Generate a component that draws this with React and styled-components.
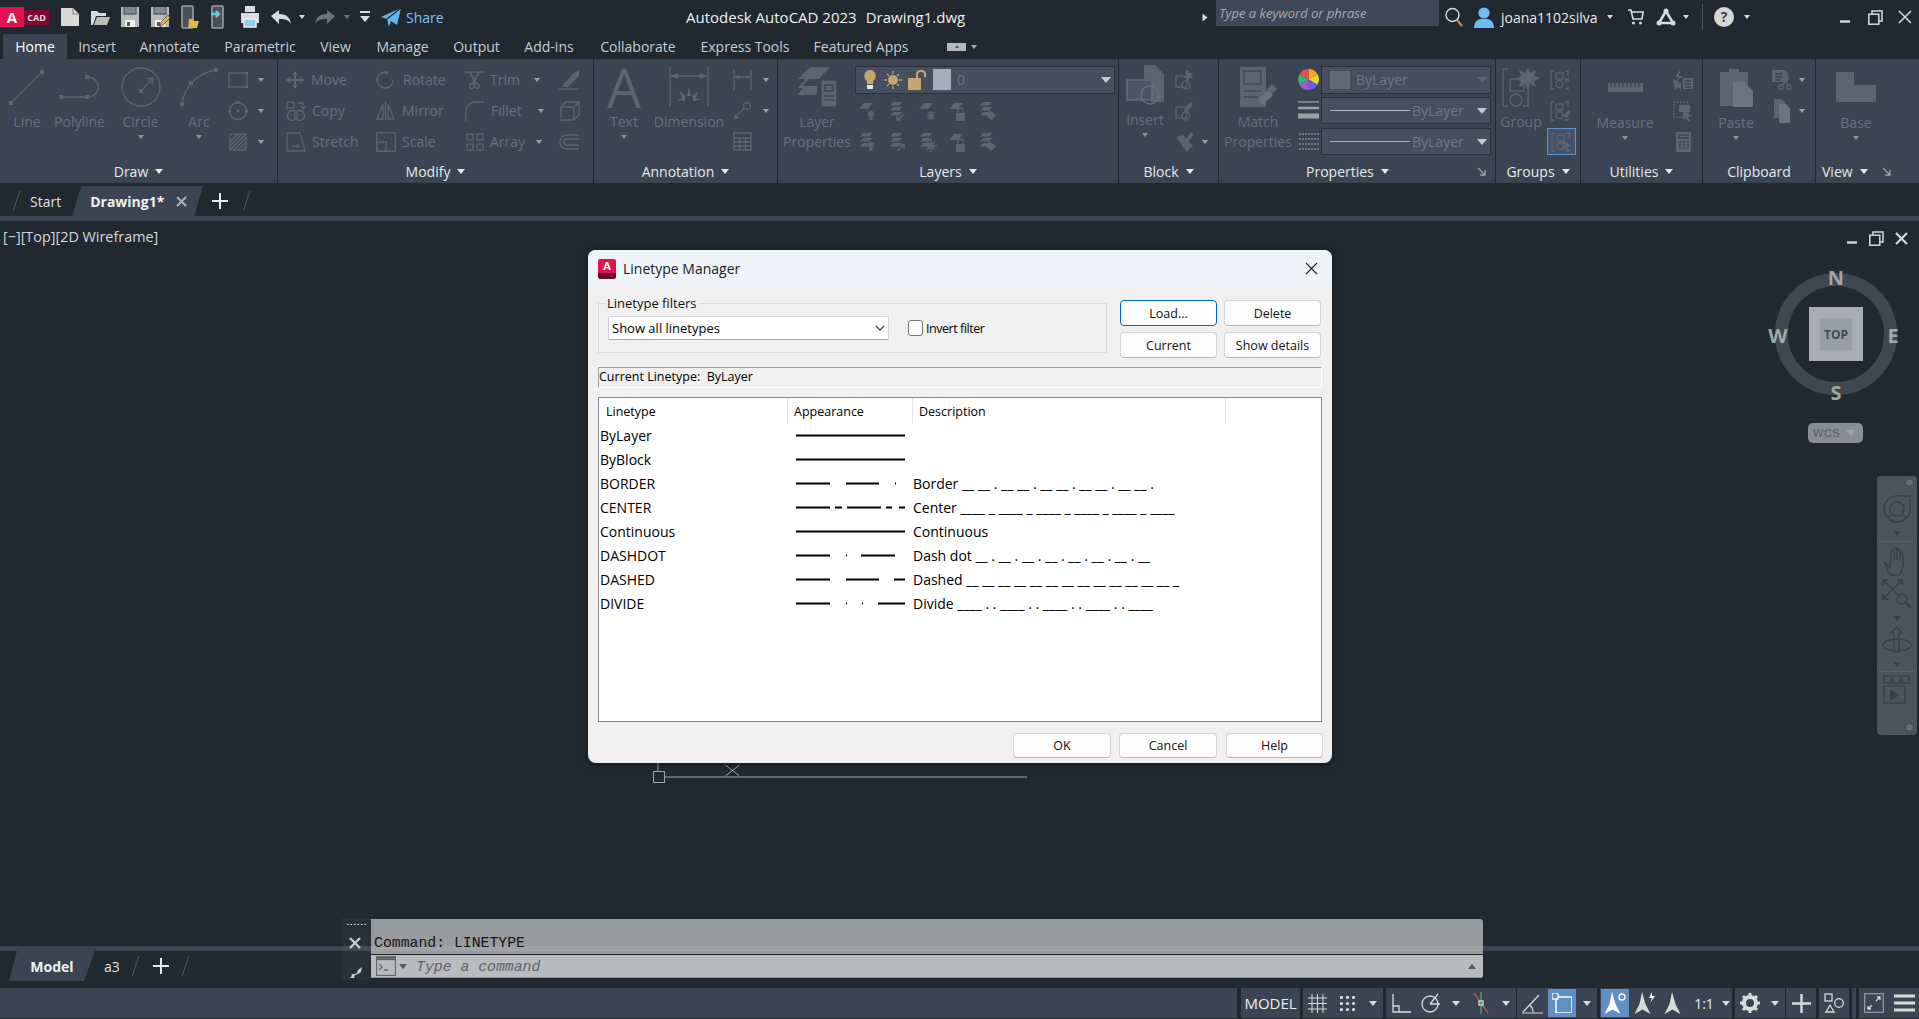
import React from 'react';
import styled, { createGlobalStyle } from 'styled-components';

const Global = createGlobalStyle`
  html, body { margin: 0; padding: 0; background: #212830; }
  * { box-sizing: border-box; }
  body { font-family: "Open Sans", "Liberation Sans", sans-serif; overflow: hidden; }
`;

const Page = styled.div`
  position: relative; width: 1919px; height: 1019px; overflow: hidden;
  background: #212830; display: flex; flex-direction: column; color: #e6e8eb;
`;
const Svg = styled.svg.attrs({ fill: 'none', stroke: 'currentColor', strokeWidth: 1.3 })`
  display: block; flex: none;
`;
const G = ({ s = 20, h, children, ...p }) => (
  <Svg width={s} height={h || s} viewBox={`0 0 ${s} ${h || s}`} {...p}>{children}</Svg>
);
const F = styled.path.attrs({ fill: 'currentColor', stroke: 'none' })``;
const Sq = ({ x, y, r = 2 }) => <rect x={x - r} y={y - r} width={r * 2} height={r * 2} fill="currentColor" stroke="none" />;

const Caret = styled.div`
  width: 0; height: 0; flex: none;
  border-left: ${p => p.$s || 4}px solid transparent;
  border-right: ${p => p.$s || 4}px solid transparent;
  border-top: ${p => (p.$s || 4) + 1}px solid ${p => p.$c || 'currentColor'};
  ${p => p.$up && `border-top: 0; border-bottom: ${(p.$s || 4) + 1}px solid ${p.$c || 'currentColor'};`}
  ${p => p.$right && 'transform: rotate(-90deg);'}
  ${p => p.$ml && `margin-left: ${p.$ml}px;`}
`;
const Slot = styled.div`
  width: ${p => p.$w}px; margin-left: ${p => p.$ml || 0}px; flex: none; height: 100%;
  display: flex; align-items: center; justify-content: center;
  ${p => p.$dim && 'color: #6d7480;'}
`;

/* ---------- title bar ---------- */
const TitleBar = styled.header`
  height: 34px; flex: none; display: flex; align-items: center; color: #d8dbde;
`;
const LeftQuick = styled.div`display: flex; align-items: center; width: 686px; height: 100%; flex: none;`;
const Logo = styled.div`display: flex; align-items: center; width: 55px; flex: none;`;
const LogoA = styled.div`
  width: 24px; height: 20px; background: #e0134f; color: #fff; font: 700 15px "Open Sans", sans-serif;
  display: flex; align-items: center; justify-content: center;
`;
const LogoCad = styled.div`
  width: 25px; height: 15px; background: #7c0b31; color: #e8d3da; font: 700 9px "Open Sans", sans-serif;
  display: flex; align-items: center; justify-content: center;
`;
const ShareText = styled.span`font-size: 14px; color: #79c3f2; margin-left: 2px;`;
const AppTitle = styled.div`font-size: 15px; color: #eef0f2; white-space: nowrap; width: 513px; flex: none; display: flex; gap: 9px;`;
const SearchBox = styled.div`
  width: 223px; height: 26px; align-self: flex-start; margin-left: 5px; flex: none; background: #3f4858;
  color: #a5abb5; font-size: 13px; font-style: italic; padding: 4px 0 0 3px; white-space: nowrap;
`;
const UserName = styled.span`font-size: 14px; color: #e6e8eb; width: 102px; flex: none; padding-left: 1px;`;
const VDivider = styled.div`width: 1px; height: 26px; background: #4a5362; margin-left: 10px; flex: none;`;

/* ---------- ribbon tabs ---------- */
const TabRow = styled.nav`height: 25px; flex: none; display: flex; padding-left: 3px;`;
const RTab = styled.div`
  width: ${p => p.$w}px; flex: none; font-size: 14px; display: flex; align-items: center; justify-content: center;
  background: ${p => (p.$on ? '#3b4453' : 'transparent')}; color: ${p => (p.$on ? '#fff' : '#c6ccd4')};
`;
const PanelToggle = styled.div`
  margin-left: 26px; display: flex; align-items: center; gap: 5px; color: #a9aeb6;
`;
const ToggleBtn = styled.div`width: 19px; height: 8px; background: #b5b8bc; display: flex; align-items: center; justify-content: center;`;

/* ---------- ribbon ---------- */
const Ribbon = styled.section`
  height: 124px; flex: none; display: flex; background: #3b4453; color: #5c646f;
`;
const Panel = styled.div`
  width: ${p => p.$w}px; flex: none; display: flex; flex-direction: column; border-right: 1px solid #222932;
  ${p => p.$last && 'border-right: 0;'}
`;
const PanelBody = styled.div`height: 100px; flex: none; display: flex; padding-top: 5px;`;
const PanelTitle = styled.div`
  height: 24px; flex: none; display: flex; align-items: center; gap: 7px; color: #e6e8eb; font-size: 14px;
  justify-content: ${p => (p.$pl !== undefined ? 'flex-start' : 'center')};
  padding-left: ${p => p.$pl || 0}px;
`;
const Launcher = styled.div`margin-left: ${p => p.$ml}px; color: #9ba2ab; display: flex;`;
const Large = styled.div`
  width: ${p => p.$w}px; margin-left: ${p => p.$ml || 0}px; flex: none; display: flex; flex-direction: column;
  align-items: center; padding-top: ${p => p.$pt ?? 3}px;
`;
const LIcon = styled.div`height: 40px; display: flex; align-items: center; justify-content: center; flex: none;`;
const Label = styled.div`
  font-size: 14px; line-height: 20px; color: #667080; text-align: center; white-space: nowrap;
  margin-top: ${p => p.$mt ?? 5}px;
`;
const LCaret = styled.div`margin-top: 3px; color: #8b929c;`;
const BigA = styled.span`font: 400 54px/40px "Open Sans", sans-serif; color: #5c646f;`;
const Col = styled.div`width: ${p => p.$w}px; flex: none;`;
const Row = styled.div`
  height: 31px; display: flex; align-items: center; padding-left: ${p => p.$pl || 0}px;
`;
const IconBox = styled.div`width: ${p => p.$w}px; flex: none; display: flex; justify-content: center; align-items: center;`;
const RowText = styled.span`
  font-size: 14px; color: #667080; margin-left: ${p => p.$ml || 0}px; width: ${p => p.$w}px; flex: none; white-space: nowrap;
`;
const CaretSlot = styled.div`width: ${p => p.$w}px; flex: none; display: flex; justify-content: center; color: #9aa0a8;`;
const LayerStack = styled.div`width: 260px; flex: none;`;
const Combo = styled.div`
  width: ${p => p.$w}px; height: ${p => p.$h}px; flex: none; display: flex; align-items: center; background: #454f60;
  border: 1px solid #2a313c; color: #6f7786; font-size: 14px; padding-left: ${p => p.$pl || 8}px; white-space: nowrap;
  margin-left: 2px;
`;
const ComboCaret = styled.div`margin-left: auto; padding-right: 3px; color: #c5c9ce;`;
const ComboSwatch = styled.div`width: 20px; height: 18px; background: #636a76; margin-right: 6px; flex: none;`;
const LayerSwatch = styled(ComboSwatch)`width: 18px; height: 21px; background: #a7adba;`;
const ComboLine = styled.div`width: 80px; height: 1px; background: #aab0b7; flex: none; margin-right: 2px;`;
const IconCells = styled.div`display: flex; height: 31px; align-items: center;`;
const IconCell = styled.div`width: 30px; flex: none; display: flex; justify-content: center;`;
const HiBox = styled.div`
  width: 29px; height: 27px; border: 1px solid #5b95c9; background: #44526a; display: flex; align-items: center; justify-content: center;
`;

/* ---------- doc tabs ---------- */
const DocRow = styled.div`height: 33px; flex: none; display: flex; align-items: stretch; padding-top: 3px;`;
const Slash = styled.div`
  width: 1px; height: 20px; background: #4f5866; transform: skewX(-18deg); flex: none; align-self: center;
  margin-left: ${p => p.$ml}px;
`;
const DocText = styled.span`font-size: 14px; color: #dde0e4; margin-left: ${p => p.$ml}px; align-self: center; flex: none; white-space: nowrap;`;
const ActiveDoc = styled.div`
  width: 131px; margin-left: ${p => p.$ml}px; flex: none; background: #3b4453;
  clip-path: polygon(9px 0, 100% 0, calc(100% - 9px) 100%, 0 100%);
  display: flex; align-items: center; padding-left: 18px; gap: 12px; font-size: 14px; font-weight: 700; color: #f0f1f3;
`;
const DocX = styled.span`color: #aab0b8; display: flex;`;
const PlusBox = styled.div`margin-left: ${p => p.$ml}px; color: #e6e8eb; align-self: center; flex: none;`;
const Strip = styled.div`height: 5px; flex: none; background: #3b4453;`;

/* ---------- viewport ---------- */
const Viewport = styled.main`position: relative; height: 725px; flex: none;`;
const VpHead = styled.div`height: 30px; display: flex; align-items: center; justify-content: space-between; padding: 0 11px 0 3px;`;
const VpLabel = styled.span`font-size: 14.4px; color: #d5d8dc; white-space: nowrap;`;
const VpControls = styled.div`display: flex; gap: 11px; color: #d6d8da; padding-top: 4px; align-items: center;`;
const Drawing = styled.svg`position: absolute; left: 640px; top: 540px; color: #a3a7ab;`;

const CubeWrap = styled.div`position: absolute; left: 1775px; top: 52px; width: 122px; height: 122px;`;
const Ring = styled.div`
  position: absolute; inset: 0; border-radius: 50%; border: 13px solid #3f4751;
  display: flex; align-items: center; justify-content: center;
`;
const CubeFace = styled.div`
  width: 54px; height: 54px; background: #a9adb1; display: flex; align-items: center; justify-content: center; flex: none;
`;
const CubeInner = styled.div`
  width: 32px; height: 32px; background: #999da7; color: #3f4650; font: 700 12px "Open Sans", sans-serif;
  display: flex; align-items: center; justify-content: center;
`;
const Compass = styled.span`
  position: absolute; left: ${p => p.$x}px; top: ${p => p.$y}px; transform: translate(-50%, -50%);
  font: 700 20px "Open Sans", sans-serif; color: #a2a6a9;
`;
const Wcs = styled.div`
  position: absolute; left: 33px; top: 150px; width: 55px; height: 20px; border-radius: 5px; background: #8a8c98;
  color: #565a66; font: 400 11px "Liberation Sans", sans-serif; display: flex; align-items: center; padding-left: 5px; gap: 6px;
  letter-spacing: .5px;
`;
const NavBar = styled.aside`
  position: absolute; left: 1877px; top: 255px; width: 40px; height: 259px; border-radius: 4px; background: #4e545c;
  color: #3a4048; display: flex; flex-direction: column; align-items: center; padding-top: 19px;
`;
const NavDot = styled.div`
  position: absolute; right: 3px; ${p => (p.$b ? 'bottom: 3px;' : 'top: 2px;')} width: 9px; height: 9px; border-radius: 50%;
  background: #686d74; border: 1px solid #42474e;
`;
const NavRule = styled.div`width: 36px; height: 1px; background: #5b6067; margin-top: ${p => p.$mt}px; flex: none;`;
const NavCaret = styled.div`margin-top: ${p => p.$mt}px; flex: none;`;
const NavIcon = styled.div`margin-top: ${p => p.$mt}px; flex: none;`;

/* ---------- dialog ---------- */
const Dialog = styled.div`
  position: absolute; left: 588px; top: 29px; width: 744px; height: 513px; border-radius: 8px; overflow: hidden;
  background: #f0f0f0; color: #000; display: flex; flex-direction: column; font: 400 13px "Open Sans", sans-serif;
  box-shadow: 0 1px 6px rgba(0,0,0,.4);
`;
const DlgTitle = styled.div`
  height: 37px; flex: none; background: #f0f4f9; display: flex; align-items: center; padding: 0 14px 0 10px; font-size: 14px; color: #1b1b1b;
`;
const DlgIcon = styled.div`
  width: 18px; height: 20px; border-radius: 2px; background: linear-gradient(#e0134f 0 72%, #6d0a2b 72%); color: #fff; flex: none;
  font: 700 11px/14px "Open Sans", sans-serif; text-align: center; margin-right: 7px;
`;
const DlgClose = styled.div`margin-left: auto; color: #222; display: flex;`;
const DlgBody = styled.div`flex: 1; display: flex; flex-direction: column; padding: 9px 10px 0;`;
const TopRow = styled.div`height: 71px; flex: none; display: flex; align-items: flex-start;`;
const Filters = styled.fieldset`
  margin: 0; width: 509px; height: 57px; flex: none; border: 1px solid #dcdcdc; padding: 6px 0 0 9px; display: flex; align-items: flex-start;
`;
const Legend = styled.legend`margin-left: -2px; padding: 0 1px; font-size: 13px; line-height: 14px; color: #111;`;
const Select = styled.div`
  width: 281px; height: 24px; flex: none; background: #fff; border: 1px solid #d4d4d4; border-bottom-color: #a8a8a8; border-radius: 2px;
  display: flex; align-items: center; padding: 0 3px 0 3px; justify-content: space-between; font-size: 13px; color: #000;
`;
const Check = styled.div`
  width: 15px; height: 16px; border: 1px solid #777; border-radius: 3px; background: #fdfdfd; margin: 4px 3px 0 19px; flex: none;
`;
const CheckText = styled.span`margin-top: 4px; white-space: nowrap; font-size: 12.5px; letter-spacing: -.45px;`;
const Actions = styled.div`
  margin: 4px 0 0 13px; display: grid; grid-template-columns: 97px 97px; grid-auto-rows: 26px; column-gap: 7px; row-gap: 6px;
`;
const Btn = styled.div`
  width: ${p => p.$w || 97}px; height: ${p => p.$h || 26}px; background: #fdfdfd; border: ${p => (p.$primary ? '1.5px solid #0067c0' : '1px solid #d3d3d3')};
  border-bottom-color: ${p => (p.$primary ? '#0067c0' : '#b4b4b4')}; border-radius: 4px; display: flex; align-items: center; justify-content: center;
  font-size: 12.5px; color: #111; flex: none; margin-left: ${p => p.$ml || 0}px;
`;
const CurrentBox = styled.div`
  height: 21px; width: 724px; flex: none; border-top: 1px solid #a0a0a0; border-left: 1px solid #a0a0a0;
  border-right: 1px solid #fff; border-bottom: 1px solid #fff; display: flex; align-items: center; padding-bottom: 2px;
  white-space: pre; font-size: 12.5px;
`;
const ListBox = styled.div`
  margin-top: 9px; width: 724px; height: 325px; flex: none; background: #fff; border: 1px solid #82878c;
`;
const ListHead = styled.div`height: 26px; display: flex; align-items: center; font-size: 12.5px;`;
const HeadCell = styled.div`
  width: ${p => p.$w}px; height: 100%; flex: none; padding: 5px 0 0 ${p => p.$pl}px; border-right: 1px solid #e6e6e6; white-space: nowrap;
`;
const ListRow = styled.div`height: 24px; display: flex; align-items: center; font-size: 14px; padding-bottom: 1px;`;
const NameCell = styled.div`width: 197px; flex: none; padding-left: 1px;`;
const LineCell = styled.div`width: 117px; flex: none; color: #000; padding-bottom: 1px;`;
const DescCell = styled.div`white-space: pre; flex: none;`;
const DlgFoot = styled.div`display: flex; justify-content: flex-end; gap: 8px; padding-top: 11px; margin-right: -1px;`;

/* ---------- bottom ---------- */
const LayoutRow = styled.div`height: 37px; flex: none; display: flex; align-items: flex-start;`;
const ModelTab = styled.div`
  width: 86px; height: 30px; margin-left: 9px; flex: none; background: #3b4453; font-size: 14px; font-weight: 700; color: #f0f1f3;
  clip-path: polygon(8px 0, 100% 0, calc(100% - 11px) 100%, 0 100%); display: flex; align-items: center; justify-content: center;
`;
const LayoutMisc = styled.div`display: flex; height: 30px; align-items: center; flex: none;`;
const StatusBar = styled.footer`height: 30px; flex: none; display: flex; color: #d8dbde;`;
const SGroup = styled.div`
  width: ${p => p.$w}px; margin-left: ${p => p.$ml || 0}px; height: 100%; flex: none; background: #3b4453; display: flex; align-items: center;
  justify-content: ${p => (p.$center ? 'center' : 'flex-start')};
`;
const SCell = styled.div`
  width: ${p => p.$w}px; height: 100%; flex: none; display: flex; align-items: center; justify-content: center;
`;
const SHi = styled.div`width: 28px; height: 28px; background: #5f8fc4; color: #fff; display: flex; align-items: center; justify-content: center;`;
const SText = styled.span`font-size: ${p => p.$s || 15}px; color: #eef0f2; white-space: nowrap;`;

const CmdDock = styled.div`
  position: absolute; left: 341px; top: 918px; width: 1142px; height: 62px; display: flex; z-index: 3;
`;
const CmdRail = styled.div`
  width: 30px; flex: none; background: rgba(255,255,255,.04); border-radius: 3px 0 0 3px; color: #c9ccd0;
  display: flex; flex-direction: column; align-items: center; padding-top: 5px;
`;
const CmdGrip = styled.div`width: 20px; height: 7px; background-image: radial-gradient(#c9ccd0 1px, transparent 1.2px); background-size: 3.5px 3.5px;`;
const CmdIconX = styled.div`margin-top: 12px; margin-right: 3px;`;
const CmdIconW = styled.div`margin-top: 15px; margin-right: 3px;`;
const CmdMain = styled.div`flex: 1; margin-top: 1px; height: 59px; display: flex; flex-direction: column; border-radius: 0 3px 3px 0; overflow: hidden;`;
const CmdHist = styled.div`
  height: 36px; flex: none; background: rgba(204,204,204,.7); border-bottom: 1px solid #1d2227; color: #151515;
  font: 400 14.8px/18px "Liberation Mono", monospace; padding: 15px 0 0 3px; white-space: pre;
`;
const CmdInput = styled.div`
  flex: 1; background: #b9bbbf; border-bottom: 1px solid #8b8d90; display: flex; align-items: center; padding: 0 7px 0 5px; color: #55585d;
`;
const CmdHolder = styled.span`font: italic 400 14.8px "Liberation Mono", monospace; margin-left: 9px; padding-top: 2px; color: #5e6167; white-space: pre;`;
const CmdUp = styled.div`margin-left: auto;`;

/* ---------- icons ---------- */
const Page0 = () => <G s={20} h={18}><path d="M1 0h12l6 6v12H1z" fill="#d9d9d6" stroke="none" /><path d="M13 0v6h6" stroke="#9a9a98" /></G>;
const IOpen = () => <G s={20} h={18}><F d="M1 3h6l2 2h7v3H6L3 17H1z" /><path d="M7 9h13l-3 8H4z" fill="#bdbdb8" stroke="none" /></G>;
const ISave = ({ pen }) => <G s={20} h={20}><path d="M1 0h18v20H1z" fill="#b9bbbd" stroke="none" /><path d="M4 0v7h12V0" stroke="#5b6066" fill="#85888c" /><rect x="5" y="13" width="10" height="7" fill="#f2f2f2" stroke="none" /><rect x="7" y="15" width="3" height="4" fill="#555" stroke="none" />{pen && <path d="M10 20l1-5 7-7 2 3-7 7z" fill="#e8b04a" stroke="#333" strokeWidth=".7" />}</G>;
const IPhoneF = ({ blue }) => <G s={18} h={24}><rect x="1" y="1" width="11" height="22" rx="1" fill="#4c5158" stroke="#9a9da1" strokeWidth="1.6" />{blue ? <path d="M0 9h8m-3-3 3 3-3 3" stroke="#6ec0f5" strokeWidth="2.4" /> : <path d="M8 14h4l1 2h5l-2 7H7z" fill="#e8b64a" stroke="none" />}</G>;
const IPrint = () => <G s={20} h={24}><F d="M5 1h10v6H5z" /><F d="M1 8h18v10H1z" /><rect x="4" y="14" width="12" height="8" fill="#8fcdf3" stroke="#f1f1f1" strokeWidth="1.5" /></G>;
const IUndo = () => <G s={20} h={14}><F d="M0 6 8 0v4c7 0 11 3 12 10-2-4-6-5-12-5v5z" /></G>;
const IRedo = () => <G s={20} h={14}><F d="M20 6 12 0v4C5 4 1 7 0 14c2-4 6-5 12-5v5z" /></G>;
const IMenu = () => <G s={10} h={12}><rect x="0" y="0" width="10" height="2" fill="currentColor" stroke="none" /><F d="M0 5h10l-5 6z" /></G>;
const IShare = () => <G s={20} h={19}><path d="M0 9 20 0l-4 17-6-4-2 6-2-8z" fill="#63b7ee" stroke="none" /><path d="M6 11 20 0" stroke="#212830" /></G>;
const ISearch = () => <G s={18} h={20}><circle cx="7.5" cy="8" r="6.5" strokeWidth="1.4" /><path d="m12 13 5 6" stroke="#c69a4e" strokeWidth="2" /></G>;
const IUser = () => <G s={20} h={21}><circle cx="10" cy="6" r="5.6" fill="#6cbdf2" stroke="none" /><path d="M0 21c0-6 3-8 6-9h8c3 1 6 3 6 9z" fill="#6cbdf2" stroke="none" /></G>;
const ICart = () => <G s={16} h={16}><path d="M0 1h3l2 9h9l1-7H4" strokeWidth="1.6" /><circle cx="5.5" cy="14" r="1.5" fill="currentColor" stroke="none" /><circle cx="12.5" cy="14" r="1.5" fill="currentColor" stroke="none" /></G>;
const I360 = () => <G s={20} h={18}><path d="M10 3 3 15h14z" strokeWidth="2.6" /><circle cx="10" cy="3" r="2.5" fill="currentColor" stroke="none" /><circle cx="3" cy="15" r="2.5" fill="currentColor" stroke="none" /><circle cx="17" cy="15" r="2.5" fill="currentColor" stroke="none" /></G>;
const HelpBall = styled.div`
  width: 20px; height: 20px; border-radius: 50%; background: #d6d6d6; color: #444; font: 700 14px/20px "Open Sans", sans-serif; text-align: center; flex: none;
`;
const IMin = () => <G s={12} h={12}><path d="M1 10.5h10" strokeWidth="2.4" /></G>;
const IRestore = () => <G s={15} h={15}><rect x=".8" y="4.2" width="10" height="10" strokeWidth="1.5" /><path d="M4 4V1h10v10h-3" strokeWidth="1.5" /></G>;
const IClose = ({ s = 14, w = 1.5 }) => <G s={s}><path d={`M1 1 ${s - 1} ${s - 1}M${s - 1} 1 1 ${s - 1}`} strokeWidth={w} /></G>;
const IPlus = ({ s = 16, w = 2 }) => <G s={s}><path d={`M${s / 2} 0V${s}M0 ${s / 2}H${s}`} strokeWidth={w} /></G>;

const ILine = () => <G s={40}><path d="M4 36 35 5" /><Sq x={4} y={36} /><Sq x={35} y={5} /></G>;
const IPoly = () => <G s={42} h={40}><path d="M2 30H28C43 30 43 10 28 10" /><Sq x={2} y={30} /><Sq x={28} y={30} /><Sq x={28} y={10} /></G>;
const ICircle = () => <G s={40}><circle cx="20" cy="20" r="19" /><path d="M20 24 32 11m-6 1 6-1-1 6" /><Sq x={20} y={24} /></G>;
const IArc = () => <G s={40}><path d="M3 37C5 20 18 6 37 3" /><Sq x={3} y={37} /><Sq x={12} y={16} /><Sq x={37} y={3} /></G>;
const IRect = () => <G s={20} h={16}><rect x="1" y="1" width="18" height="14" /><Sq x={1} y={15} r={1.5} /><Sq x={19} y={1} r={1.5} /><Sq x={19} y={15} r={1.5} /></G>;
const ICircD = () => <G s={20}><circle cx="10" cy="10" r="8.5" /><Sq x={10} y={10} r={1.5} /><Sq x={10} y={1.5} r={1.5} /><Sq x={18.5} y={10} r={1.5} /><Sq x={1.5} y={10} r={1.5} /></G>;
const IHatch = () => <G s={20}><rect x="2" y="2" width="16" height="16" /><path d="M2 10 10 2M2 14 14 2M2 18 18 2M6 18 18 6M10 18l8-8M14 18l4-4" strokeWidth="1.4" /></G>;
const IMove = () => <G s={18}><path d="M9 1v16M1 9h16" strokeWidth="2" /><F d="M9 0l3 4H6zM9 18l3-4H6zM0 9l4-3v6zM18 9l-4-3v6z" /></G>;
const IRotate = () => <G s={19}><path d="M9 2a8 8 0 1 0 8 8" strokeWidth="1.4" /><F d="M9 0v5l4-2.5z" /></G>;
const ITrim = () => <G s={19}><path d="M0 2h19" /><path d="m5 2 6 12M14 2 8 14" strokeWidth="2" /><circle cx="7" cy="16" r="2.4" /><circle cx="12" cy="16" r="2.4" /></G>;
const IErase = () => <G s={21}><path d="M0 20h20" /><F d="M3 17 15 4l5-3v6L9 18H4z" /></G>;
const ICopy = () => <G s={20}><rect x="1" y="1" width="7" height="6" /><path d="M11 2h6v5m-2-2 2 3 2-3" /><circle cx="6.5" cy="14.5" r="5" /><circle cx="13.5" cy="14.5" r="5" /></G>;
const IMirror = () => <G s={19}><path d="M9.5 0v19M7 3 1 18h6zM12 3l6 15h-6z" /></G>;
const IFillet = () => <G s={20}><path d="M1 20V10C1 4 5 1 11 1h8" /></G>;
const IStretch = () => <G s={20}><path d="M1 1h13l5 18H1zM6 14h7m-2-2 2 2-2 2" /></G>;
const IScale = () => <G s={20}><rect x=".7" y=".7" width="18.6" height="18.6" /><rect x=".7" y="10" width="9.5" height="9.3" /></G>;
const IArray = () => <G s={18}><rect x="1" y="1" width="6" height="6" /><rect x="11" y="1" width="6" height="6" /><rect x="1" y="11" width="6" height="6" /><rect x="11" y="11" width="6" height="6" /></G>;
const IBox = () => <G s={20}><path d="M1 6h13v13H1zM1 6l5-5h13v13l-5 5M14 6l5-5" /></G>;
const IOffset = () => <G s={21} h={16}><path d="M20 1H8a7 7 0 0 0 0 14h12M20 5H8a3 3 0 0 0 0 6h12" /></G>;
const IDim = () => <G s={40}><path d="M1 0v40M39 0v40M2 9h36" /><F d="M2 9l7-3v6zM38 9l-7-3v6zM20 21l2 8h-4zM8 33l8-3v4zM32 33l-8-3v4zM10 24l7 5-3 3zM30 24l-7 5 3 3z" /></G>;
const IDimS = () => <G s={19} h={20}><path d="M1 0v20M18 0v20M2 7h15" /><F d="M2 7l4-2v4zM17 7l-4-2v4z" /></G>;
const ILeader = () => <G s={19}><circle cx="14" cy="5" r="3.5" /><path d="M11 7 2 17" /><F d="M0 19l2-6 4 4z" /></G>;
const ITable = () => <G s={19}><path d="M1 1h17v17H1zM1 6h17M1 10h17M1 14h17M6.5 6v12M12.5 6v12" /></G>;
const ILayers = () => <G s={40}><F d="M13 0h20L22 12H1z" /><F d="M9 11h4L5 19h16l-1 2H1zM6 21h14v4l-1 3H0z" /><rect x="24" y="20" width="16" height="27" fill="currentColor" stroke="#3b4453" transform="translate(0 -7)" /><path d="M28 18h8v6h-8zM27 29h10M27 33h10" stroke="#3b4453" /></G>;
const Par = ({ y = 0, h = 3.4 }) => <F d={`M${h + 3} ${y}h9l-${h} ${h}H3z`} />;
const LayA = ({ kids }) => <G s={20}><Par y={1} /><Par y={6} /><Par y={11} />{kids}</G>;
const LayB = ({ kids }) => <G s={20}><path d="M7 2h9l-5 6H2z" fill="currentColor" stroke="none" />{kids}</G>;
const Bulb = () => <><circle cx="14" cy="13" r="3.5" fill="currentColor" stroke="#3b4453" strokeWidth=".6" /><rect x="12.5" y="16" width="3" height="3" fill="currentColor" stroke="none" /></>;
const Lck = () => <><rect x="9" y="12" width="9" height="8" fill="currentColor" stroke="none" /><path d="M11 12V9.5a2.5 2.5 0 0 1 5 0V12" /></>;
const Arw = ({ up }) => <path d={up ? 'M10 19l7-6m-4 0h4v4' : 'M17 13l-7 6m4 0h-4v-4'} strokeWidth="1.4" />;
const Snow = () => <path d="M14 10v9M10 14.5h8M11 11l6 7M17 11l-6 7" />;
const Sun = () => <><circle cx="14" cy="14" r="3" fill="currentColor" stroke="none" /><path d="M14 8v3M14 17v3M8 14h3M17 14h3M10 10l2 2M18 10l-2 2M10 18l2-2M18 18l-2-2" /></>;
const Tag = () => <F d="M12 9l7 5-4 5-5-3z" />;
const IInsert = () => <G s={38} h={40}><F d="M18 0h11l9 9v28H25V14H18z" /><rect x="1" y="15" width="25" height="20" fill="#4c5565" stroke="#6a7280" /><circle cx="24" cy="30" r="9" stroke="#6a7280" /><Sq x={1} y={35} r={1.5} /></G>;
const IBlockA = () => <G s={18} h={20}><rect x="1" y="6" width="11" height="11" /><circle cx="11" cy="15" r="4" /><F d="M13 0l1.5 3 3.5-.5-2 3 2 2.5-3.5 0L13 11l-1-3-4 0 3-3-1-3z" /></G>;
const IBlockB = () => <G s={18} h={20}><rect x="1" y="6" width="11" height="11" /><circle cx="11" cy="15" r="4" /><F d="M9 9l6-8 3 2-6 8z" /></G>;
const IBlockC = () => <G s={20}><F d="M1 5l7-2 10 11-6 6z" /><F d="M10 8l6-8 3 2-6 8z" /></G>;
const IMatch = () => <G s={38} h={40}><rect x="1" y="0" width="26" height="40" fill="currentColor" stroke="none" /><rect x="5" y="4" width="17" height="13" stroke="#3b4453" /><path d="M5 24h17M5 30h14" stroke="#3b4453" /><path d="M19 33l10-10 5 5-10 10z" fill="#6a727e" stroke="none" /><F d="M28 22l5-5 5 5-5 5z" /></G>;
const IWheel = () => <G s={21}><path d="M10.5 10.5V0a10.5 10.5 0 0 1 9 5.2z" fill="#f5a623" stroke="none" /><path d="M10.5 10.5l9-5.2a10.5 10.5 0 0 1 0 10.4z" fill="#e8d23a" stroke="none" /><path d="M10.5 10.5l9 5.2a10.5 10.5 0 0 1-9 5.3z" fill="#6d5ce0" stroke="none" /><path d="M10.5 10.5V21a10.5 10.5 0 0 1-9-5.3z" fill="#a855d8" stroke="none" /><path d="M10.5 10.5l-9 5.2a10.5 10.5 0 0 1 0-10.4z" fill="#35b37e" stroke="none" /><path d="M10.5 10.5l-9-5.2a10.5 10.5 0 0 1 9-5.3z" fill="#e8504a" stroke="none" /></G>;
const IWeights = () => <G s={21} h={20}><path d="M0 1h21" stroke="#9ba0a6" /><path d="M0 7h21" strokeWidth="2.6" stroke="#9ba0a6" /><path d="M0 15h21" strokeWidth="5" stroke="#9ba0a6" /></G>;
const ILtypes = () => <G s={20} h={20}><path d="M0 2h20M0 7h20M0 12h20M0 17h20" strokeDasharray="2 1" stroke="#7c848e" /></G>;
const IGroup = () => <G s={38} h={40}><path d="M6 2H1v37h5M26 20v19h-5" /><rect x="8" y="12" width="14" height="12" /><circle cx="14" cy="33" r="6" /><F d="M26 0l2 6 6-3-2 6 6 2-6 3 2 6-6-3-2 6-3-6-6 3 2-6-6-2 6-3-2-6 6 3z" /></G>;
const BrIcon = ({ x }) => <G s={21} h={20}><path d="M4 1H1v18h3M15 1h3v5M15 19h3v-2" /><rect x="6" y="3" width="7" height="6" /><circle cx="9.5" cy="14" r="3.5" />{x}</G>;
const IRuler = () => <G s={35} h={9}><F d="M0 0h35v9H0z" /><path d="M3 0v4M7 0v4M11 0v4M15 0v4M19 0v4M23 0v4M27 0v4M31 0v4" stroke="#3b4453" /></G>;
const IQuick = () => <G s={20}><F d="M7 0 2 7h4l-4 5 8-6H6z" /><F d="M0 9l8 4v7l-3-3-3 3z" /><rect x="10" y="8" width="10" height="11" fill="currentColor" stroke="none" /><path d="M12 11h6M12 14h6M12 17h6" stroke="#3b4453" /></G>;
const ISelect = () => <G s={20}><rect x="1" y="1" width="14" height="15" strokeDasharray="2 1" /><F d="M6 4h11v7H6z" /><F d="M10 9l9 6-4 1 2 4-2 1-2-4-3 2z" /></G>;
const ICalc = () => <G s={15} h={20}><F d="M0 0h15v20H0z" /><path d="M3 3h9v3H3zM3 10h2M7 10h2M11 10h2M3 13h2M7 13h2M11 13h2M3 16h2M7 16h2M11 16h2" stroke="#3b4453" strokeWidth="1.4" /></G>;
const IPaste = () => <G s={33} h={40}><F d="M0 5h9V2h10v3h9v34H0z" /><path d="M13 15h11l9 9v16H13z" fill="#6c7480" stroke="none" /></G>;
const ICutDoc = () => <G s={20}><F d="M0 0h13l3 3v9H0z" /><path d="M3 4h8M3 7h8M3 10h5" stroke="#3b4453" /><path d="m9 8 8 8M17 8l-8 8" /><circle cx="9" cy="17" r="2.2" /><circle cx="17" cy="17" r="2.2" /></G>;
const ICopyDoc = () => <G s={16} h={24}><F d="M0 0h8l3 3v16H0z" /><path d="M5 5h7l4 4v15H5z" fill="#6c7480" stroke="none" /></G>;
const IBase = () => <G s={40} h={30}><F d="M0 0h18v13h22v17H0z" /></G>;

const ILaunch = () => <G s={9}><path d="M1 1l6 6M3 8h5V3" strokeWidth="1.4" /></G>;
const SGrid = () => <G s={19}><path d="M0 4h19M0 9.5h19M0 15h19M4 0v19M9.5 0v19M15 0v19" strokeWidth="1" /></G>;
const SDots = () => <G s={15}>{[1.5, 7.5, 13.5].map(x => [1.5, 7.5, 13.5].map(y => <circle key={x + '-' + y} cx={x} cy={y} r="1.6" fill="currentColor" stroke="none" />))}</G>;
const SOrtho = () => <G s={19}><path d="M1 0v18h18M1 12h6v6" /></G>;
const SPolar = () => <G s={20}><circle cx="9" cy="11" r="8" /><path d="M9 11 17 1M9 11h10" /></G>;
const SOsnap = () => <G s={16} h={22}><path d="M1 1l14 20" stroke="#e0574f" /><path d="M8 0v22" stroke="#3fae67" /><rect x="6" y="9" width="4" height="4" /></G>;
const SIso = () => <G s={21}><path d="M0 20h21" strokeWidth="2" stroke="#8b9097" /><path d="M1 19 17 2M8 12c2 2 3 5 3 7" /></G>;
const SDyn = () => <G s={20}><rect x="4" y="4" width="16" height="16" strokeWidth="1.5" /><rect x="0" y="0" width="6" height="6" fill="#5f8fc4" stroke="#fff" /></G>;
const SAnn = ({ kid }) => <G s={24} h={24}><path d="M9 1l3.5 12 5 10-8-4.5L1.5 23l5-10z" fill="currentColor" stroke="none" />{kid}</G>;
const SGear = () => <G s={20}><circle cx="10" cy="10" r="6" strokeWidth="4" /><path d="M10 0v4M10 16v4M0 10h4M16 10h4M3 3l3 3M14 14l3 3M17 3l-3 3M6 14l-3 3" strokeWidth="3" /></G>;
const SShapes = () => <G s={20}><rect x="1" y="1" width="7" height="7" /><circle cx="15" cy="10" r="4.3" /><path d="M6 12l4 7H2z" /></G>;
const SFull = () => <G s={20}><rect x=".7" y=".7" width="18.6" height="18.6" stroke="#9298a0" /><path d="M12 8l4-4m-3 0h3v3M8 12l-4 4m3 0H4v-3" /></G>;
const SLines = () => <G s={21} h={18}><path d="M0 2h21M0 9h21M0 16h21" strokeWidth="3" /></G>;
const ICmd = () => <G s={20} h={20}><rect x=".5" y=".5" width="19" height="19" stroke="#63676c" /><rect x=".5" y=".5" width="19" height="3" fill="#63676c" stroke="#63676c" /><path d="M3 8l3 3-3 3M8 14h4" stroke="#63676c" /></G>;
const IWrench = () => <G s={16}><F d="M2 14c2 0 2-1 3-3L4 10h4l2-1 1-3 4-3-1 5-3 2-3 1-1 3z" /></G>;
const ISteer = () => <G s={28}><path d="M14 1C7 1 1 7 1 14s6 13 13 13 13-6 13-13V1z" strokeWidth="1.6" /><circle cx="14" cy="14" r="7" strokeWidth="1.6" /><path d="M8 20l-4 3M20 20l4 3" /></G>;
const IHand = () => <G s={28} h={30}><path d="M2 17l5 4 1-15c0-2 3-2 3 0v8-11c0-2 3-2 3 0v11-9c0-2 3-2 3 0v10-7c0-2 3-2 3 0v12l-2 7c-1 2-2 2-3 2H9c-2 0-3-2-4-4z" strokeWidth="1.5" /></G>;
const INavZoom = () => <G s={30}><path d="M2 2l17 17M19 2 2 19" strokeWidth="1.6" /><F d="M0 0h7L0 7zM21 0v7l-7-7zM0 21v-7l7 7z" /><circle cx="20" cy="20" r="5" strokeWidth="1.6" /><path d="m24 24 5 5" strokeWidth="3" /></G>;
const IOrbit = () => <G s={30}><path d="M15 0l5 6h-3v19h-5V6H9z" strokeWidth="1.5" /><ellipse cx="15" cy="18" rx="14" ry="6" strokeWidth="1.5" /></G>;
const IShow = () => <G s={28} h={30}><rect x="1" y="1" width="7" height="7" /><rect x="10" y="1" width="7" height="7" /><rect x="19" y="1" width="7" height="7" /><rect x="1" y="11" width="21" height="17" /><F d="M7 14l10 6-10 6z" /></G>;

/* ---------- small tool row ---------- */
const Tool = ({ pl, iw = 20, icon, text, gap, tw, cw }) => (
  <Row $pl={pl}>
    <IconBox $w={iw}>{icon}</IconBox>
    {text && <RowText $ml={gap} $w={tw}>{text}</RowText>}
    {cw && <CaretSlot $w={cw}><Caret $s={3.5} /></CaretSlot>}
  </Row>
);
const LTool = ({ w, ml, pt, icon, labels, mt, caret }) => (
  <Large $w={w} $ml={ml} $pt={pt}>
    <LIcon>{icon}</LIcon>
    <Label $mt={mt}>{labels[0]}</Label>
    {labels[1] && <Label $mt={0}>{labels[1]}</Label>}
    {caret && <LCaret><Caret $s={3.5} /></LCaret>}
  </Large>
);
const PTitle = ({ t, arrow = true, pl, launch }) => (
  <PanelTitle $pl={pl}>
    {t}
    {arrow && <Caret $s={4.5} $c="#e6e8eb" />}
    {launch && <Launcher $ml={launch}><ILaunch /></Launcher>}
  </PanelTitle>
);

const TABS = [['Home', 64], ['Insert', 60], ['Annotate', 85], ['Parametric', 96], ['View', 55], ['Manage', 79], ['Output', 69], ['Add-ins', 76], ['Collaborate', 102], ['Express Tools', 112], ['Featured Apps', 120]];

const LINES = [
  ['ByLayer', [[0, 109]], ''],
  ['ByBlock', [[0, 109]], ''],
  ['BORDER', [[0, 34], [50, 33], [99, 1]], 'Border __ __ . __ __ . __ __ . __ __ . __ __ .'],
  ['CENTER', [[0, 34], [39, 7], [51, 34], [90, 6], [103, 6]], 'Center ____ _ ____ _ ____ _ ____ _ ____ _ ____'],
  ['Continuous', [[0, 109]], 'Continuous'],
  ['DASHDOT', [[0, 34], [50, 1], [65, 34]], 'Dash dot __ . __ . __ . __ . __ . __ . __ . __'],
  ['DASHED', [[0, 34], [50, 33], [98, 11]], 'Dashed __ __ __ __ __ __ __ __ __ __ __ __ __ _'],
  ['DIVIDE', [[0, 34], [50, 1], [66, 1], [82, 27]], 'Divide ____ . . ____ . . ____ . . ____ . . ____'],
];

export default function App() {
  return (
    <Page>
      <Global />
      <TitleBar>
        <LeftQuick>
          <Logo><LogoA>A</LogoA><LogoCad>CAD</LogoCad></Logo>
          <Slot $w={30}><Page0 /></Slot>
          <Slot $w={30}><IOpen /></Slot>
          <Slot $w={30}><ISave /></Slot>
          <Slot $w={30}><ISave pen /></Slot>
          <Slot $w={30}><IPhoneF /></Slot>
          <Slot $w={30}><IPhoneF blue /></Slot>
          <Slot $w={30}><IPrint /></Slot>
          <Slot $w={31}><IUndo /></Slot>
          <Slot $w={12}><Caret $s={3} /></Slot>
          <Slot $w={33} $dim><IRedo /></Slot>
          <Slot $w={12} $dim><Caret $s={3} /></Slot>
          <Slot $w={24}><IMenu /></Slot>
          <Slot $w={27}><IShare /></Slot>
          <ShareText>Share</ShareText>
        </LeftQuick>
        <AppTitle><span>Autodesk AutoCAD 2023</span><span>Drawing1.dwg</span></AppTitle>
        <Slot $w={12}><Caret $s={4} $right /></Slot>
        <SearchBox>Type a keyword or phrase</SearchBox>
        <Slot $w={29}><ISearch /></Slot>
        <Slot $w={32}><IUser /></Slot>
        <UserName>joana1102silva</UserName>
        <Slot $w={14} $ml={1}><Caret $s={3} /></Slot>
        <Slot $w={32} $ml={3}><ICart /></Slot>
        <Slot $w={28}><I360 /></Slot>
        <Slot $w={12}><Caret $s={3} /></Slot>
        <VDivider />
        <Slot $w={28} $ml={7}><HelpBall>?</HelpBall></Slot>
        <Slot $w={12} $ml={3}><Caret $s={3} /></Slot>
        <Slot $w={30} $ml={77}><IMin /></Slot>
        <Slot $w={31}><IRestore /></Slot>
        <Slot $w={28}><IClose /></Slot>
      </TitleBar>

      <TabRow>
        {TABS.map(([t, w], i) => <RTab key={t} $w={w} $on={i === 0}>{t}</RTab>)}
        <PanelToggle><ToggleBtn><Caret $up $s={2.5} $c="#555" /></ToggleBtn><Caret $s={3} /></PanelToggle>
      </TabRow>

      <Ribbon>
        <Panel $w={278}>
          <PanelBody>
            <LTool w={50} ml={2} icon={<ILine />} labels={['Line']} />
            <LTool w={55} icon={<IPoly />} labels={['Polyline']} />
            <LTool w={67} icon={<ICircle />} labels={['Circle']} caret />
            <LTool w={50} icon={<IArc />} labels={['Arc']} caret />
            <Col $w={53}>
              <Tool pl={4} icon={<IRect />} cw={26} />
              <Tool pl={4} icon={<ICircD />} cw={26} />
              <Tool pl={4} icon={<IHatch />} cw={26} />
            </Col>
          </PanelBody>
          <PTitle t="Draw" />
        </Panel>
        <Panel $w={316}>
          <PanelBody>
            <Col $w={90}>
              <Tool pl={8} iw={18} icon={<IMove />} text="Move" gap={7} tw={50} />
              <Tool pl={8} iw={20} icon={<ICopy />} text="Copy" gap={6} tw={50} />
              <Tool pl={8} iw={20} icon={<IStretch />} text="Stretch" gap={6} tw={50} />
            </Col>
            <Col $w={90}>
              <Tool pl={8} iw={19} icon={<IRotate />} text="Rotate" gap={8} tw={50} />
              <Tool pl={8} iw={19} icon={<IMirror />} text="Mirror" gap={7} tw={50} />
              <Tool pl={8} iw={19} icon={<IScale />} text="Scale" gap={7} tw={50} />
            </Col>
            <Col $w={90}>
              <Tool pl={7} iw={19} icon={<ITrim />} text="Trim" gap={6} tw={42} cw={10} />
              <Tool pl={7} iw={19} icon={<IFillet />} text="Fillet" gap={7} tw={42} cw={16} />
              <Tool pl={7} iw={19} icon={<IArray />} text="Array" gap={6} tw={42} cw={14} />
            </Col>
            <Col $w={45}>
              <Tool pl={11} iw={21} icon={<IErase />} />
              <Tool pl={11} iw={21} icon={<IBox />} />
              <Tool pl={11} iw={21} icon={<IOffset />} />
            </Col>
          </PanelBody>
          <PTitle t="Modify" />
        </Panel>
        <Panel $w={184}>
          <PanelBody>
            <LTool w={48} ml={6} icon={<BigA>A</BigA>} labels={['Text']} caret />
            <LTool w={78} ml={2} icon={<IDim />} labels={['Dimension']} />
            <Col $w={49}>
              <Tool pl={5} iw={19} icon={<IDimS />} cw={28} />
              <Tool pl={5} iw={19} icon={<ILeader />} cw={28} />
              <Tool pl={5} iw={19} icon={<ITable />} />
            </Col>
          </PanelBody>
          <PTitle t="Annotation" />
        </Panel>
        <Panel $w={341}>
          <PanelBody>
            <LTool w={70} ml={4} icon={<ILayers />} labels={['Layer', 'Properties']} />
            <LayerStack>
              <Row $pl={1}>
                <Combo $w={260} $h={28} $pl={7}>
                  <G s={14} h={20} style={{ marginRight: 7 }}><path d="M7 0a6 6 0 0 1 3 11v3H4v-3A6 6 0 0 1 7 0z" fill="#c4a76c" stroke="none" /><rect x="4" y="15" width="6" height="4" fill="#e4e4e4" stroke="none" /></G>
                  <G s={18} style={{ marginRight: 6 }}><circle cx="9" cy="9" r="5" fill="#c4a76c" stroke="none" /><path d="M9 0v3M9 15v3M0 9h3M15 9h3M3 3l2 2M15 3l-2 2M3 15l2-2M15 15l-2-2" stroke="#c4a76c" /></G>
                  <G s={19} h={20} style={{ marginRight: 6 }}><rect x="0" y="8" width="13" height="12" fill="#c4a76c" stroke="none" /><path d="M9 8V4c0-4 8-4 8 0v3" strokeWidth="2" stroke="#c4a76c" /></G>
                  <LayerSwatch />
                  <span>0</span>
                  <ComboCaret><Caret $s={5} /></ComboCaret>
                </Combo>
              </Row>
              <IconCells>
                <IconCell><LayB kids={<Bulb />} /></IconCell>
                <IconCell><LayA kids={<Arw />} /></IconCell>
                <IconCell><LayB kids={<Snow />} /></IconCell>
                <IconCell><LayB kids={<Lck />} /></IconCell>
                <IconCell><LayA kids={<Tag />} /></IconCell>
              </IconCells>
              <IconCells>
                <IconCell><LayA kids={<Bulb />} /></IconCell>
                <IconCell><LayA kids={<Arw up />} /></IconCell>
                <IconCell><LayA kids={<Sun />} /></IconCell>
                <IconCell><LayB kids={<Lck />} /></IconCell>
                <IconCell><LayA kids={<Tag />} /></IconCell>
              </IconCells>
            </LayerStack>
          </PanelBody>
          <PTitle t="Layers" />
        </Panel>
        <Panel $w={100}>
          <PanelBody>
            <LTool w={46} ml={3} pt={1} icon={<IInsert />} labels={['Insert']} caret />
            <Col $w={50}>
              <Tool pl={7} iw={18} icon={<IBlockA />} />
              <Tool pl={7} iw={18} icon={<IBlockB />} />
              <Tool pl={7} iw={20} icon={<IBlockC />} cw={20} />
            </Col>
          </PanelBody>
          <PTitle t="Block" />
        </Panel>
        <Panel $w={277}>
          <PanelBody>
            <LTool w={68} ml={5} icon={<IMatch />} labels={['Match', 'Properties']} />
            <Col $w={200}>
              <Row $pl={6}>
                <IconBox $w={21}><IWheel /></IconBox>
                <Combo $w={170} $h={28}>
                  <ComboSwatch /><span>ByLayer</span><ComboCaret><Caret $s={5} $c="#5f6772" /></ComboCaret>
                </Combo>
              </Row>
              <Row $pl={6}>
                <IconBox $w={21}><IWeights /></IconBox>
                <Combo $w={170} $h={27}>
                  <ComboLine /><span>ByLayer</span><ComboCaret><Caret $s={5} /></ComboCaret>
                </Combo>
              </Row>
              <Row $pl={6}>
                <IconBox $w={21}><ILtypes /></IconBox>
                <Combo $w={170} $h={27}>
                  <ComboLine /><span>ByLayer</span><ComboCaret><Caret $s={5} /></ComboCaret>
                </Combo>
              </Row>
            </Col>
          </PanelBody>
          <PTitle t="Properties" pl={87} launch={81} />
        </Panel>
        <Panel $w={85}>
          <PanelBody>
            <LTool w={44} ml={3} icon={<IGroup />} labels={['Group']} />
            <Col $w={37}>
              <Tool pl={7} iw={21} icon={<BrIcon x={<path d="M15 8l4 4m0-4-4 4" />} />} />
              <Tool pl={7} iw={21} icon={<BrIcon x={<F d="M13 15l5-6 3 2-5 6z" />} />} />
              <Row $pl={4}><HiBox><BrIcon x={<F d="M12 8l8 6-4 1 2 4-2 1-2-4-3 2z" />} /></HiBox></Row>
            </Col>
          </PanelBody>
          <PTitle t="Groups" />
        </Panel>
        <Panel $w={122}>
          <PanelBody>
            <LTool w={60} ml={14} icon={<IRuler />} labels={['Measure']} mt={6} caret />
            <Col $w={47}>
              <Tool pl={18} icon={<IQuick />} />
              <Tool pl={18} icon={<ISelect />} />
              <Tool pl={18} icon={<ICalc />} />
            </Col>
          </PanelBody>
          <PTitle t="Utilities" />
        </Panel>
        <Panel $w={113}>
          <PanelBody>
            <LTool w={44} ml={11} icon={<IPaste />} labels={['Paste']} mt={6} caret />
            <Col $w={57}>
              <Tool pl={14} icon={<ICutDoc />} cw={20} />
              <Tool pl={14} icon={<ICopyDoc />} cw={20} />
            </Col>
          </PanelBody>
          <PTitle t="Clipboard" arrow={false} />
        </Panel>
        <Panel $last $w={105}>
          <PanelBody>
            <LTool w={44} ml={18} icon={<IBase />} labels={['Base']} mt={6} caret />
          </PanelBody>
          <PTitle t="View" pl={6} launch={7} />
        </Panel>
      </Ribbon>

      <DocRow>
        <Slash $ml={16} />
        <DocText $ml={13}>Start</DocText>
        <ActiveDoc $ml={11}>Drawing1*<DocX><IClose s={11} w={2} /></DocX></ActiveDoc>
        <PlusBox $ml={9}><IPlus /></PlusBox>
        <Slash $ml={18} />
      </DocRow>
      <Strip />

      <Viewport>
        <VpHead>
          <VpLabel>[−][Top][2D Wireframe]</VpLabel>
          <VpControls><IMin /><IRestore /><IClose s={13} w={2.2} /></VpControls>
        </VpHead>
        <Drawing width="400" height="30" viewBox="0 0 400 30">
          <g fill="none" stroke="currentColor">
            <path d="M18 2v9M24 16H387" />
            <rect x="13.5" y="10.5" width="11" height="11" />
            <path d="M85.5 4l14 11M99.5 4l-14 11" />
          </g>
        </Drawing>
        <CubeWrap>
          <Ring><CubeFace><CubeInner>TOP</CubeInner></CubeFace></Ring>
          <Compass $x={61} $y={4}>N</Compass>
          <Compass $x={3} $y={62}>W</Compass>
          <Compass $x={118} $y={62}>E</Compass>
          <Compass $x={61} $y={119}>S</Compass>
          <Wcs>WCS<Caret $s={5} $c="#9ea0ad" /></Wcs>
        </CubeWrap>
        <NavBar>
          <NavDot />
          <NavIcon $mt={0}><ISteer /></NavIcon>
          <NavCaret $mt={8}><Caret $s={4} /></NavCaret>
          <NavRule $mt={5} />
          <NavIcon $mt={4}><IHand /></NavIcon>
          <NavIcon $mt={3}><INavZoom /></NavIcon>
          <NavCaret $mt={7}><Caret $s={4} /></NavCaret>
          <NavIcon $mt={6}><IOrbit /></NavIcon>
          <NavCaret $mt={5}><Caret $s={4} /></NavCaret>
          <NavRule $mt={4} />
          <NavIcon $mt={3}><IShow /></NavIcon>
          <NavDot $b />
        </NavBar>

        <Dialog>
          <DlgTitle>
            <DlgIcon>A</DlgIcon>
            Linetype Manager
            <DlgClose><IClose s={13} w={1.1} /></DlgClose>
          </DlgTitle>
          <DlgBody>
            <TopRow>
              <Filters>
                <Legend>Linetype filters</Legend>
                <Select>Show all linetypes<G s={10} h={6}><path d="M1 1l4 4 4-4" stroke="#444" /></G></Select>
                <Check />
                <CheckText>Invert filter</CheckText>
              </Filters>
              <Actions>
                <Btn $primary>Load...</Btn>
                <Btn>Delete</Btn>
                <Btn>Current</Btn>
                <Btn>Show details</Btn>
              </Actions>
            </TopRow>
            <CurrentBox>Current Linetype:  ByLayer</CurrentBox>
            <ListBox>
              <ListHead>
                <HeadCell $w={189} $pl={7}>Linetype</HeadCell>
                <HeadCell $w={125} $pl={6}>Appearance</HeadCell>
                <HeadCell $w={313} $pl={6}>Description</HeadCell>
              </ListHead>
              {LINES.map(([n, segs, d]) => (
                <ListRow key={n}>
                  <NameCell>{n}</NameCell>
                  <LineCell>
                    <G s={109} h={3}>
                      {segs.map(([x, w]) => <rect key={x} x={x} y="0.5" width={w} height="2" fill="currentColor" stroke="none" />)}
                    </G>
                  </LineCell>
                  <DescCell>{d}</DescCell>
                </ListRow>
              ))}
            </ListBox>
            <DlgFoot>
              <Btn $w={98} $h={25}>OK</Btn>
              <Btn $w={98} $h={25}>Cancel</Btn>
              <Btn $w={97} $h={25} $ml={1}>Help</Btn>
            </DlgFoot>
          </DlgBody>
        </Dialog>
      </Viewport>

      <Strip />
      <LayoutRow>
        <ModelTab>Model</ModelTab>
        <LayoutMisc>
          <DocText $ml={9}>a3</DocText>
          <Slash $ml={15} />
          <PlusBox $ml={17}><IPlus /></PlusBox>
          <Slash $ml={16} />
        </LayoutMisc>
      </LayoutRow>

      <StatusBar>
        <SGroup $w={1237} />
        <SGroup $ml={4} $w={59} $center><SText>MODEL</SText></SGroup>
        <SGroup $ml={3} $w={80}>
          <SCell $w={29}><SGrid /></SCell><SCell $w={30}><SDots /></SCell><SCell $w={21}><Caret $s={4} /></SCell>
        </SGroup>
        <SGroup $ml={3} $w={130}>
          <SCell $w={31}><SOrtho /></SCell><SCell $w={28}><SPolar /></SCell><SCell $w={21}><Caret $s={4} /></SCell>
          <SCell $w={30}><SOsnap /></SCell><SCell $w={20}><Caret $s={4} /></SCell>
        </SGroup>
        <SGroup $ml={1} $w={80}>
          <SCell $w={30}><SIso /></SCell><SCell $w={30}><SHi><SDyn /></SHi></SCell><SCell $w={20}><Caret $s={4} /></SCell>
        </SGroup>
        <SGroup $ml={3} $w={132}>
          <SCell $w={30}><SHi><SAnn kid={<circle cx="19" cy="6" r="3" stroke="#fff" />} /></SHi></SCell>
          <SCell $w={30}><SAnn kid={<path d="M19 1l-3 6h3l-2 5 5-7h-3z" fill="#fff" stroke="none" />} /></SCell>
          <SCell $w={29}><SAnn /></SCell>
          <SCell $w={30}><SText $s={14}>1:1</SText></SCell>
          <SCell $w={13}><Caret $s={4} /></SCell>
        </SGroup>
        <SGroup $ml={3} $w={50}><SCell $w={30}><SGear /></SCell><SCell $w={20}><Caret $s={4} /></SCell></SGroup>
        <SGroup $ml={1} $w={30}><SCell $w={30}><IPlus s={19} w={2.4} /></SCell></SGroup>
        <SGroup $ml={3} $w={30}><SCell $w={30}><SShapes /></SCell></SGroup>
        <SGroup $ml={3} $w={4} />
        <SGroup $ml={3} $w={60}><SCell $w={30}><SFull /></SCell><SCell $w={30}><SLines /></SCell></SGroup>
      </StatusBar>

      <CmdDock>
        <CmdRail>
          <CmdGrip />
          <CmdIconX><IClose s={12} w={2.4} /></CmdIconX>
          <CmdIconW><IWrench /></CmdIconW>
        </CmdRail>
        <CmdMain>
          <CmdHist>Command: LINETYPE</CmdHist>
          <CmdInput>
            <ICmd />
            <Caret $s={4} $ml={3} />
            <CmdHolder>Type a command</CmdHolder>
            <CmdUp><Caret $up $s={4.5} /></CmdUp>
          </CmdInput>
        </CmdMain>
      </CmdDock>
    </Page>
  );
}
